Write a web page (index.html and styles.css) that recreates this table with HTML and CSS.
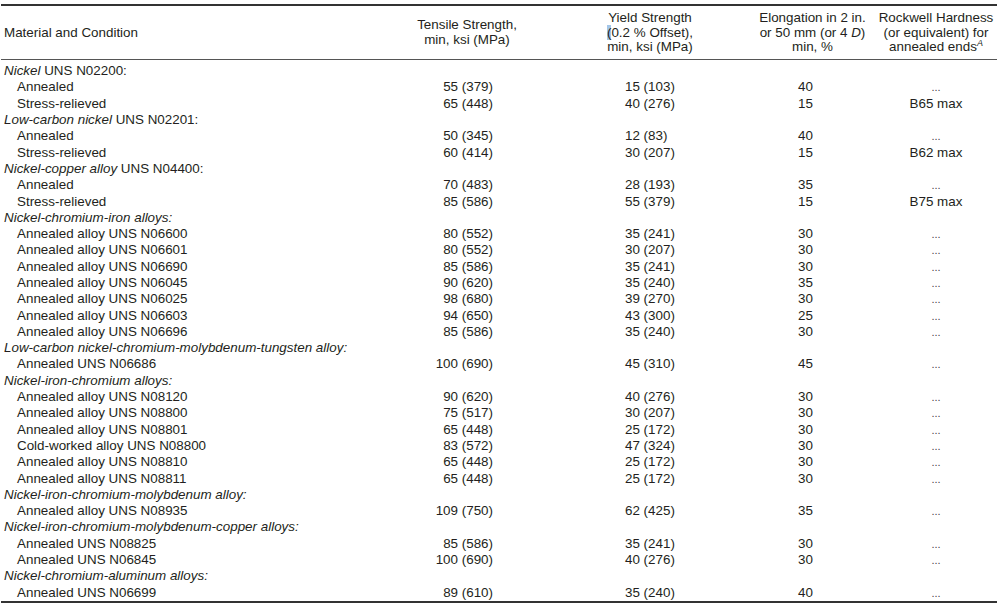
FILE: index.html
```html
<!DOCTYPE html>
<html>
<head>
<meta charset="utf-8">
<link rel="stylesheet" href="styles.css">
</head>
<body>
<table class="spec">
<colgroup>
<col class="c1"><col class="c2"><col class="c3"><col class="c4"><col class="c5">
</colgroup>
<thead>
<tr>
<th class="hl">Material and Condition</th>
<th>Tensile Strength,<br>min, ksi (MPa)</th>
<th>Yield Strength<br><span class="sel">(</span>0.2 % Offset),<br>min, ksi (MPa)</th>
<th>Elongation in 2 in.<br>or 50 mm (or 4 <i>D</i>)<br>min, %</th>
<th>Rockwell Hardness<br>(or equivalent) for<br>annealed ends<sup><i>A</i></sup></th>
</tr>
</thead>
<tbody>
<tr class="first"><td class="grp"><i>Nickel</i> UNS N02200:</td><td></td><td></td><td></td><td></td></tr>
<tr><td class="sub">Annealed</td><td class="ts">55 (379)</td><td class="ys">15 (103)</td><td class="el">40</td><td class="rh"><span class="dots">...</span></td></tr>
<tr><td class="sub">Stress-relieved</td><td class="ts">65 (448)</td><td class="ys">40 (276)</td><td class="el">15</td><td class="rh">B65 max</td></tr>
<tr><td class="grp"><i>Low-carbon nickel</i> UNS N02201:</td><td></td><td></td><td></td><td></td></tr>
<tr><td class="sub">Annealed</td><td class="ts">50 (345)</td><td class="ys">12 (83)</td><td class="el">40</td><td class="rh"><span class="dots">...</span></td></tr>
<tr><td class="sub">Stress-relieved</td><td class="ts">60 (414)</td><td class="ys">30 (207)</td><td class="el">15</td><td class="rh">B62 max</td></tr>
<tr><td class="grp"><i>Nickel-copper alloy</i> UNS N04400:</td><td></td><td></td><td></td><td></td></tr>
<tr><td class="sub">Annealed</td><td class="ts">70 (483)</td><td class="ys">28 (193)</td><td class="el">35</td><td class="rh"><span class="dots">...</span></td></tr>
<tr><td class="sub">Stress-relieved</td><td class="ts">85 (586)</td><td class="ys">55 (379)</td><td class="el">15</td><td class="rh">B75 max</td></tr>
<tr><td class="grp"><i>Nickel-chromium-iron alloys:</i></td><td></td><td></td><td></td><td></td></tr>
<tr><td class="sub">Annealed alloy UNS N06600</td><td class="ts">80 (552)</td><td class="ys">35 (241)</td><td class="el">30</td><td class="rh"><span class="dots">...</span></td></tr>
<tr><td class="sub">Annealed alloy UNS N06601</td><td class="ts">80 (552)</td><td class="ys">30 (207)</td><td class="el">30</td><td class="rh"><span class="dots">...</span></td></tr>
<tr><td class="sub">Annealed alloy UNS N06690</td><td class="ts">85 (586)</td><td class="ys">35 (241)</td><td class="el">30</td><td class="rh"><span class="dots">...</span></td></tr>
<tr><td class="sub">Annealed alloy UNS N06045</td><td class="ts">90 (620)</td><td class="ys">35 (240)</td><td class="el">35</td><td class="rh"><span class="dots">...</span></td></tr>
<tr><td class="sub">Annealed alloy UNS N06025</td><td class="ts">98 (680)</td><td class="ys">39 (270)</td><td class="el">30</td><td class="rh"><span class="dots">...</span></td></tr>
<tr><td class="sub">Annealed alloy UNS N06603</td><td class="ts">94 (650)</td><td class="ys">43 (300)</td><td class="el">25</td><td class="rh"><span class="dots">...</span></td></tr>
<tr><td class="sub">Annealed alloy UNS N06696</td><td class="ts">85 (586)</td><td class="ys">35 (240)</td><td class="el">30</td><td class="rh"><span class="dots">...</span></td></tr>
<tr><td class="grp"><i>Low-carbon nickel-chromium-molybdenum-tungsten alloy:</i></td><td></td><td></td><td></td><td></td></tr>
<tr><td class="sub">Annealed UNS N06686</td><td class="ts">100 (690)</td><td class="ys">45 (310)</td><td class="el">45</td><td class="rh"><span class="dots">...</span></td></tr>
<tr><td class="grp"><i>Nickel-iron-chromium alloys:</i></td><td></td><td></td><td></td><td></td></tr>
<tr><td class="sub">Annealed alloy UNS N08120</td><td class="ts">90 (620)</td><td class="ys">40 (276)</td><td class="el">30</td><td class="rh"><span class="dots">...</span></td></tr>
<tr><td class="sub">Annealed alloy UNS N08800</td><td class="ts">75 (517)</td><td class="ys">30 (207)</td><td class="el">30</td><td class="rh"><span class="dots">...</span></td></tr>
<tr><td class="sub">Annealed alloy UNS N08801</td><td class="ts">65 (448)</td><td class="ys">25 (172)</td><td class="el">30</td><td class="rh"><span class="dots">...</span></td></tr>
<tr><td class="sub">Cold-worked alloy UNS N08800</td><td class="ts">83 (572)</td><td class="ys">47 (324)</td><td class="el">30</td><td class="rh"><span class="dots">...</span></td></tr>
<tr><td class="sub">Annealed alloy UNS N08810</td><td class="ts">65 (448)</td><td class="ys">25 (172)</td><td class="el">30</td><td class="rh"><span class="dots">...</span></td></tr>
<tr><td class="sub">Annealed alloy UNS N08811</td><td class="ts">65 (448)</td><td class="ys">25 (172)</td><td class="el">30</td><td class="rh"><span class="dots">...</span></td></tr>
<tr><td class="grp"><i>Nickel-iron-chromium-molybdenum alloy:</i></td><td></td><td></td><td></td><td></td></tr>
<tr><td class="sub">Annealed alloy UNS N08935</td><td class="ts">109 (750)</td><td class="ys">62 (425)</td><td class="el">35</td><td class="rh"><span class="dots">...</span></td></tr>
<tr><td class="grp"><i>Nickel-iron-chromium-molybdenum-copper alloys:</i></td><td></td><td></td><td></td><td></td></tr>
<tr><td class="sub">Annealed UNS N08825</td><td class="ts">85 (586)</td><td class="ys">35 (241)</td><td class="el">30</td><td class="rh"><span class="dots">...</span></td></tr>
<tr><td class="sub">Annealed UNS N06845</td><td class="ts">100 (690)</td><td class="ys">40 (276)</td><td class="el">30</td><td class="rh"><span class="dots">...</span></td></tr>
<tr><td class="grp"><i>Nickel-chromium-aluminum alloys:</i></td><td></td><td></td><td></td><td></td></tr>
<tr class="last"><td class="sub">Annealed UNS N06699</td><td class="ts">89 (610)</td><td class="ys">35 (240)</td><td class="el">40</td><td class="rh"><span class="dots">...</span></td></tr>
</tbody>
</table>
</body>
</html>
```
FILE: styles.css
```css
html, body {
  margin: 0;
  padding: 0;
  background: #ffffff;
}
body {
  padding: 4px 3px 0 1px;
  font-family: "Liberation Sans", Arial, Helvetica, sans-serif;
  font-size: 13.4px;
  color: #231f20;
}
.spec {
  width: 996px;
  table-layout: fixed;
  border-collapse: collapse;
  border-spacing: 0;
}
.c1 { width: 383px; }
.c2 { width: 166px; }
.c3 { width: 200px; }
.c4 { width: 125px; }
.c5 { width: 122px; }

.spec thead th {
  font-weight: normal;
  text-align: center;
  vertical-align: middle;
  line-height: 14.5px;
  padding: 5px 0 4px;
  white-space: nowrap;
  border-top: 2px solid #333;
  border-bottom: 1px solid #555;
}
.spec thead th.hl {
  text-align: left;
  padding-left: 3px;
}
.spec sup {
  font-size: 9px;
  line-height: 0;
  vertical-align: 5px;
}
.sel {
  background: #a4c6e8;
}
.spec tbody tr {
  height: 16.3px;
}
.spec td {
  padding: 0;
  height: 16.3px;
  line-height: 15px;
  white-space: nowrap;
  vertical-align: middle;
}
.spec tr.first td {
  padding-top: 3px;
}
.spec tr.last td {
  padding-bottom: 1px;
  border-bottom: 2px solid #333;
}
.grp {
  padding-left: 3px !important;
}
.sub {
  padding-left: 16px !important;
}
.ts {
  text-align: right;
  padding-right: 57px !important;
}
.ys {
  text-align: left;
  padding-left: 75px !important;
}
.el {
  text-align: left;
  padding-left: 48px !important;
}
.rh {
  text-align: center;
}
.dots {
  font-size: 11px;
  line-height: 0;
  color: #444;
}
```
